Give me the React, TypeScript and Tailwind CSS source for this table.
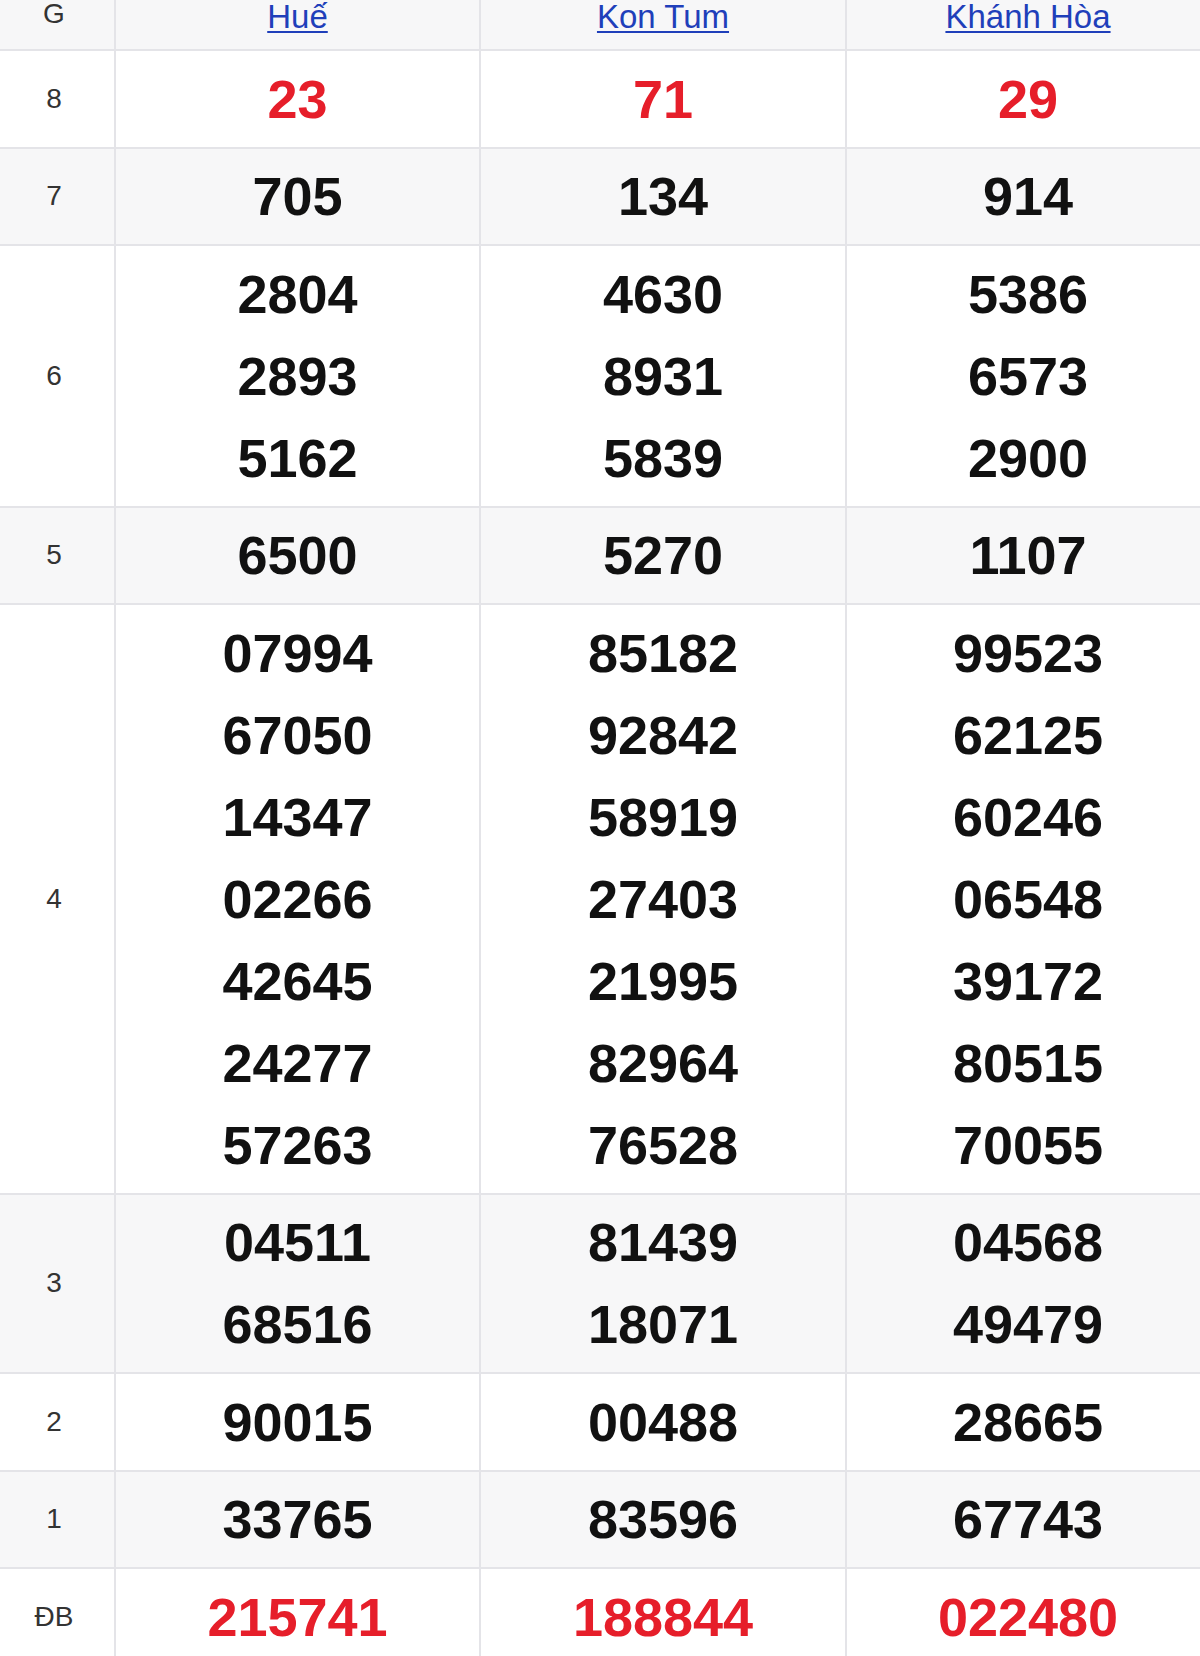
const provinces = ["Huế", "Kon Tum", "Khánh Hòa"];

type Prize = { label: string; red?: boolean; values: string[][] };

const prizes: Prize[] = [
  { label: "8", red: true, values: [["23"], ["71"], ["29"]] },
  { label: "7", values: [["705"], ["134"], ["914"]] },
  {
    label: "6",
    values: [
      ["2804", "2893", "5162"],
      ["4630", "8931", "5839"],
      ["5386", "6573", "2900"],
    ],
  },
  { label: "5", values: [["6500"], ["5270"], ["1107"]] },
  {
    label: "4",
    values: [
      ["07994", "67050", "14347", "02266", "42645", "24277", "57263"],
      ["85182", "92842", "58919", "27403", "21995", "82964", "76528"],
      ["99523", "62125", "60246", "06548", "39172", "80515", "70055"],
    ],
  },
  {
    label: "3",
    values: [
      ["04511", "68516"],
      ["81439", "18071"],
      ["04568", "49479"],
    ],
  },
  { label: "2", values: [["90015"], ["00488"], ["28665"]] },
  { label: "1", values: [["33765"], ["83596"], ["67743"]] },
  { label: "ĐB", red: true, values: [["215741"], ["188844"], ["022480"]] },
];

export default function App() {
  return (
    <div className="w-[1200px] h-[1656px] overflow-hidden bg-white font-['Liberation_Sans',Arial,sans-serif]">
      <div className="grid w-[1211px] grid-cols-[116px_365px_366px_364px]">
        {/* header */}
        <div className="h-[51px] border-b-2 border-r-2 border-[#e4e4e8] bg-[#f7f7f8] pr-[6px] text-center text-[28px] leading-[28px] text-[#333]">
          G
        </div>
        {provinces.map((p) => (
          <div
            key={p}
            className="h-[51px] border-b-2 border-r-2 border-[#e4e4e8] bg-[#f7f7f8] text-center text-[33px] leading-[33px]"
          >
            <a href="#" className="text-[#1f3fba] underline decoration-2 underline-offset-[3px]">
              {p}
            </a>
          </div>
        ))}

        {prizes.map((row, i) => {
          const bg = i % 2 === 1 ? "bg-[#f7f7f8]" : "bg-white";
          return [
            <div
              key={row.label}
              className={`flex items-center justify-center border-b-2 border-r-2 border-[#e4e4e8] pr-[6px] text-[28px] text-[#333] ${bg}`}
            >
              {row.label}
            </div>,
            ...row.values.map((vals, j) => (
              <div
                key={row.label + j}
                className={`border-b-2 border-r-2 border-[#e4e4e8] py-[6.75px] text-center text-[54px] font-bold leading-[82px] ${bg} ${
                  row.red ? "text-[#e61e2a]" : "text-[#111]"
                }`}
              >
                {vals.map((v) => (
                  <div key={v}>{v}</div>
                ))}
              </div>
            )),
          ];
        })}
      </div>
    </div>
  );
}
